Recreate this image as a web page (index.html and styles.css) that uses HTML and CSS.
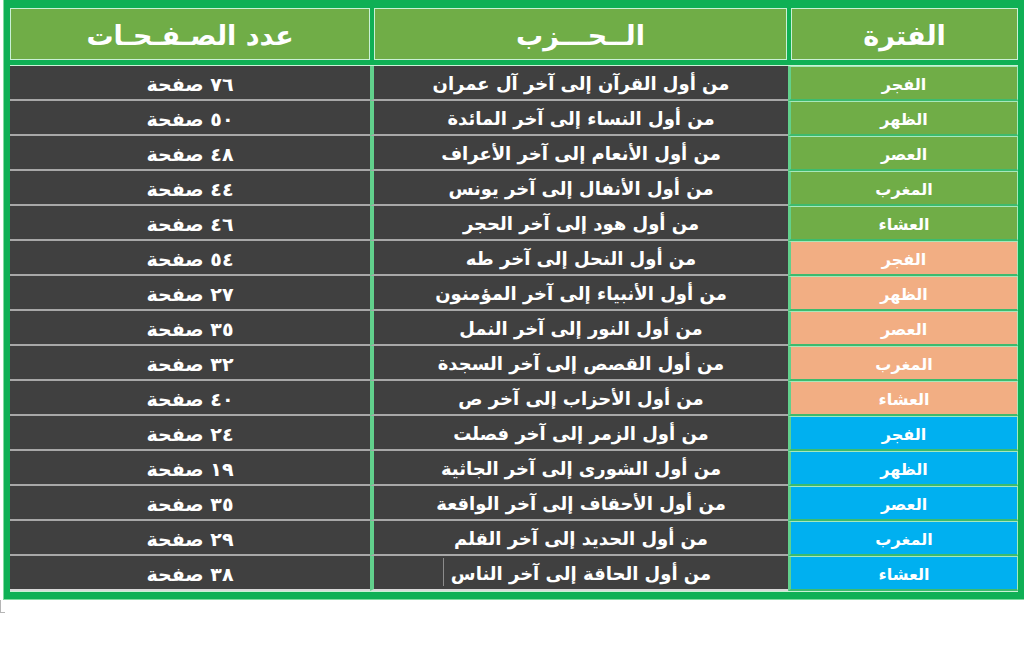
FILE: index.html
```html
<!DOCTYPE html>
<html lang="ar" dir="rtl">
<head>
<meta charset="utf-8">
<title>جدول الأحزاب</title>
<link rel="stylesheet" href="styles.css">
</head>
<body>
<div class="sheet">
  <div class="head">
    <div class="hcell">الفترة</div>
    <div class="hcell">الــحـــزب</div>
    <div class="hcell">عدد الصـفـحـات</div>
  </div>
  <div class="rows">
    <div class="row"><div class="period g">الفجر</div><div class="hizb">من أول القرآن إلى آخر آل عمران</div><div class="pages">٧٦ صفحة</div></div>
    <div class="row"><div class="period g">الظهر</div><div class="hizb">من أول النساء إلى آخر المائدة</div><div class="pages">٥٠ صفحة</div></div>
    <div class="row"><div class="period g">العصر</div><div class="hizb">من أول الأنعام إلى آخر الأعراف</div><div class="pages">٤٨ صفحة</div></div>
    <div class="row"><div class="period g">المغرب</div><div class="hizb">من أول الأنفال إلى آخر يونس</div><div class="pages">٤٤ صفحة</div></div>
    <div class="row"><div class="period g">العشاء</div><div class="hizb">من أول هود إلى آخر الحجر</div><div class="pages">٤٦ صفحة</div></div>
    <div class="row"><div class="period o">الفجر</div><div class="hizb">من أول النحل إلى آخر طه</div><div class="pages">٥٤ صفحة</div></div>
    <div class="row"><div class="period o">الظهر</div><div class="hizb">من أول الأنبياء إلى آخر المؤمنون</div><div class="pages">٢٧ صفحة</div></div>
    <div class="row"><div class="period o">العصر</div><div class="hizb">من أول النور إلى آخر النمل</div><div class="pages">٣٥ صفحة</div></div>
    <div class="row"><div class="period o">المغرب</div><div class="hizb">من أول القصص إلى آخر السجدة</div><div class="pages">٣٢ صفحة</div></div>
    <div class="row"><div class="period o">العشاء</div><div class="hizb">من أول الأحزاب إلى آخر ص</div><div class="pages">٤٠ صفحة</div></div>
    <div class="row"><div class="period b">الفجر</div><div class="hizb">من أول الزمر إلى آخر فصلت</div><div class="pages">٢٤ صفحة</div></div>
    <div class="row"><div class="period b">الظهر</div><div class="hizb">من أول الشورى إلى آخر الجاثية</div><div class="pages">١٩ صفحة</div></div>
    <div class="row"><div class="period b">العصر</div><div class="hizb">من أول الأحقاف إلى آخر الواقعة</div><div class="pages">٣٥ صفحة</div></div>
    <div class="row"><div class="period b">المغرب</div><div class="hizb">من أول الحديد إلى آخر القلم</div><div class="pages">٢٩ صفحة</div></div>
    <div class="row last"><div class="period b">العشاء</div><div class="hizb"><span class="caret"></span>من أول الحاقة إلى آخر الناس</div><div class="pages">٣٨ صفحة</div></div>
  </div>
</div>
<div class="mark"></div>
</body>
</html>
```

FILE: styles.css
```css
html, body {
  margin: 0;
  padding: 0;
  background: #ffffff;
}
body {
  font-family: "DejaVu Sans", "Noto Sans", sans-serif;
  font-weight: bold;
  color: #ffffff;
}
.sheet {
  box-sizing: border-box;
  width: 1021px;
  margin-left: 3px;
  background: #0fb055;
  border-left: 1px solid #7fdca0;
  border-bottom: 1px solid #7fdca0;
  padding: 8px 6px 7px 6px;
}
.head {
  display: grid;
  grid-template-columns: 227px 413px 360px;
  column-gap: 4px;
}
.hcell {
  box-sizing: border-box;
  height: 52px;
  background: #70ad47;
  border: 1px solid #c9f1d5;
  display: flex;
  align-items: center;
  justify-content: center;
  font-size: 27px;
  line-height: 1;
  padding-top: 2px;
}
.rows {
  margin-top: 5px;
  border-top: 1px solid #c9f1d5;
  border-bottom: 1px solid #c9f1d5;
}
.row {
  display: grid;
  grid-template-columns: 230px 418px 360px;
  height: 35px;
}
.period,
.hizb,
.pages {
  box-sizing: border-box;
  display: flex;
  align-items: center;
  justify-content: center;
  padding-top: 2px;
}
.period {
  font-size: 16px;
  border: 1px solid #a6e9bb;
  border-bottom: 2px solid #3dbb6e;
  border-left: 3px solid #62d08c;
}
.period.g { background: #70ad47; }
.period.o { background: #f2ae83; }
.period.b { background: #00b0f0; }
.hizb,
.pages {
  background: #404040;
  border-bottom: 2px solid #a8a8a8;
}
.hizb {
  font-size: 18px;
  border-left: 4px solid #62d08c;
  position: relative;
}
.pages {
  font-size: 19px;
}
.row.last .hizb,
.row.last .pages {
  border-bottom: 2px solid #d9d9d9;
}
.caret {
  position: absolute;
  left: 69px;
  top: 2px;
  bottom: 3px;
  width: 1px;
  background: #8c8c8c;
}
.mark {
  width: 4px;
  height: 12px;
  border-left: 1px solid #b5b5b5;
  border-bottom: 1px solid #b5b5b5;
  margin-right: auto;
  margin-left: 0;
}
```
